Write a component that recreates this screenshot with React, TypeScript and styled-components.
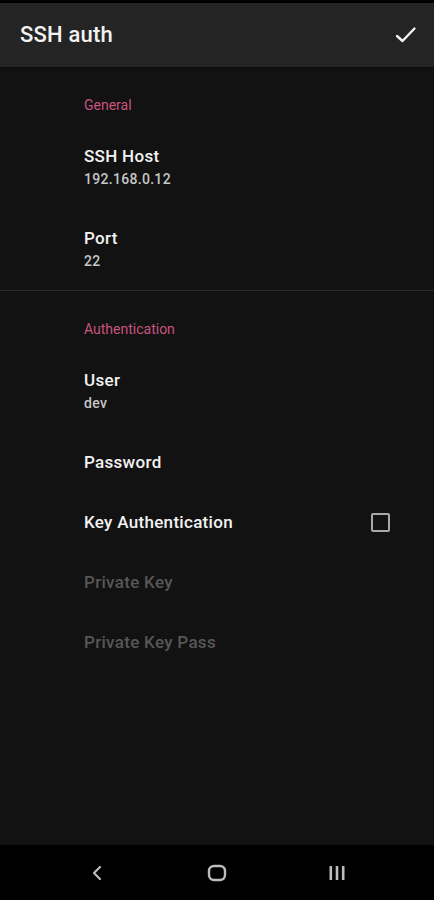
import * as React from 'react';
import styled, { createGlobalStyle } from 'styled-components';

const GlobalStyle = createGlobalStyle`
  html, body {
    margin: 0;
    padding: 0;
    background: #121212;
  }
  body {
    font-family: Roboto, "Noto Sans", "DejaVu Sans", sans-serif;
  }
`;

const Screen = styled.div`
  display: flex;
  flex-direction: column;
  width: 434px;
  height: 900px;
  background: #121212;
  overflow: hidden;
`;

const StatusBar = styled.div`
  height: 3px;
  background: #000;
  flex: none;
`;

const Toolbar = styled.div`
  flex: none;
  height: 64px;
  display: flex;
  align-items: center;
  justify-content: space-between;
  padding: 0 15px 0 20px;
  background: #242424;
  box-shadow: 0 1px 2px rgba(0, 0, 0, 0.5);
`;

const Title = styled.div`
  color: #f2f2f2;
  font-size: 22px;
  font-weight: 500;
  line-height: 28px;
  letter-spacing: 0.2px;
`;

const IconButton = styled.div`
  width: 26px;
  height: 26px;
  display: flex;
  align-items: center;
  justify-content: center;
`;

const Content = styled.div`
  flex: 1;
  display: flex;
  flex-direction: column;
`;

const Category = styled.div`
  padding: 28px 16px 11px 84px;
  color: #c9527f;
  font-size: 14px;
  line-height: 20px;
`;

const Divider = styled.div`
  height: 1px;
  background: #2b2b2b;
`;

const Item = styled.div`
  display: flex;
  align-items: center;
  padding: 18px 44px 18px 84px;
`;

const ItemText = styled.div`
  flex: 1;
  display: flex;
  flex-direction: column;
`;

const ItemTitle = styled.div<{ $disabled?: boolean }>`
  color: ${(p) => (p.$disabled ? '#575757' : '#f2f2f2')};
  font-size: 17px;
  font-weight: 500;
  letter-spacing: 0.3px;
  line-height: 24px;
`;

const ItemSummary = styled.div`
  color: #c6c6c6;
  font-size: 14px;
  font-weight: 500;
  letter-spacing: 0.3px;
  line-height: 22px;
`;

const CheckBox = styled.div`
  width: 15px;
  height: 15px;
  border: 2.5px solid #a8a8a8;
  border-radius: 2px;
`;

const NavBar = styled.div`
  flex: none;
  height: 55px;
  background: #000;
  display: flex;
  justify-content: center;
  align-items: center;
`;

const NavCell = styled.div`
  width: 120px;
  display: flex;
  justify-content: center;
  align-items: center;
`;

type Pref = { title: string; summary?: string; disabled?: boolean; checkbox?: boolean };

const general: Pref[] = [
  { title: 'SSH Host', summary: '192.168.0.12' },
  { title: 'Port', summary: '22' },
];

const auth: Pref[] = [
  { title: 'User', summary: 'dev' },
  { title: 'Password' },
  { title: 'Key Authentication', checkbox: true },
  { title: 'Private Key', disabled: true },
  { title: 'Private Key Pass', disabled: true },
];

const PrefRow = ({ pref }: { pref: Pref }) => (
  <Item>
    <ItemText>
      <ItemTitle $disabled={pref.disabled}>{pref.title}</ItemTitle>
      {pref.summary && <ItemSummary>{pref.summary}</ItemSummary>}
    </ItemText>
    {pref.checkbox && <CheckBox />}
  </Item>
);

export default function App() {
  return (
    <Screen>
      <GlobalStyle />
      <StatusBar />
      <Toolbar>
        <Title>SSH auth</Title>
        <IconButton>
          <svg width="24" height="24" viewBox="0 0 24 24">
            <path d="M3 13 L8.5 18 L20.5 5.5" fill="none" stroke="#f2f2f2" strokeWidth="2.4" strokeLinecap="round" strokeLinejoin="round" />
          </svg>
        </IconButton>
      </Toolbar>
      <Content>
        <Category>General</Category>
        {general.map((p) => (
          <PrefRow key={p.title} pref={p} />
        ))}
        <Divider />
        <Category>Authentication</Category>
        {auth.map((p) => (
          <PrefRow key={p.title} pref={p} />
        ))}
      </Content>
      <NavBar>
        <NavCell>
          <svg width="14" height="16" viewBox="0 0 14 16">
            <path d="M10 2 L4 8 L10 14" fill="none" stroke="#bdbdbd" strokeWidth="2.2" strokeLinecap="round" strokeLinejoin="round" />
          </svg>
        </NavCell>
        <NavCell>
          <svg width="20" height="18" viewBox="0 0 20 18">
            <rect x="2" y="2" width="16" height="14" rx="5" fill="none" stroke="#bdbdbd" strokeWidth="2.4" />
          </svg>
        </NavCell>
        <NavCell>
          <svg width="18" height="16" viewBox="0 0 18 16">
            <rect x="1.5" y="1" width="2.6" height="14" rx="0.6" fill="#bdbdbd" />
            <rect x="7.7" y="1" width="2.6" height="14" rx="0.6" fill="#bdbdbd" />
            <rect x="13.9" y="1" width="2.6" height="14" rx="0.6" fill="#bdbdbd" />
          </svg>
        </NavCell>
      </NavBar>
    </Screen>
  );
}
